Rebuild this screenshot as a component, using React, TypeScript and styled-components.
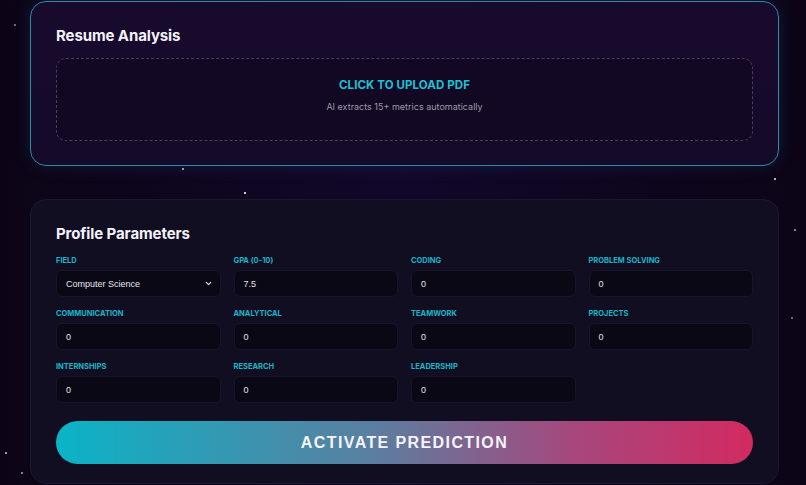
import styled, { createGlobalStyle } from "styled-components";

const GlobalStyle = createGlobalStyle`
  html, body {
    margin: 0;
    padding: 0;
    background: #0d0519;
    font-family: Inter, "Liberation Sans", sans-serif;
  }
  * { box-sizing: border-box; }
`;

const fields = [
  { label: "Field", value: "Computer Science", select: true },
  { label: "GPA (0-10)", value: "7.5" },
  { label: "Coding", value: "0" },
  { label: "Problem Solving", value: "0" },
  { label: "Communication", value: "0" },
  { label: "Analytical", value: "0" },
  { label: "Teamwork", value: "0" },
  { label: "Projects", value: "0" },
  { label: "Internships", value: "0" },
  { label: "Research", value: "0" },
  { label: "Leadership", value: "0" },
];

export default function App() {
  return (
    <Page>
      <GlobalStyle />
      <UploadCard>
        <CardTitle>Resume Analysis</CardTitle>
        <DropZone>
          <DropTitle>CLICK TO UPLOAD PDF</DropTitle>
          <DropHint>AI extracts 15+ metrics automatically</DropHint>
        </DropZone>
      </UploadCard>

      <ParamsCard>
        <CardTitle>Profile Parameters</CardTitle>
        <FieldGrid>
          {fields.map((f) => (
            <Field key={f.label}>
              <Label>{f.label}</Label>
              {f.select ? (
                <SelectBox>
                  <span>{f.value}</span>
                  <svg width="9" height="9" viewBox="0 0 24 24" fill="none" stroke="#d8d8e0" strokeWidth="3.5" strokeLinecap="round" strokeLinejoin="round">
                    <path d="M6 9l6 6 6-6" />
                  </svg>
                </SelectBox>
              ) : (
                <Input>{f.value}</Input>
              )}
            </Field>
          ))}
        </FieldGrid>
        <PredictButton>ACTIVATE PREDICTION</PredictButton>
      </ParamsCard>
    </Page>
  );
}

const Page = styled.div`
  min-height: 485px;
  padding: 1px 27px 0 30px;
  display: flex;
  flex-direction: column;
  gap: 33px;
  background-color: #0d0519;
  background-image:
    radial-gradient(circle at 245px 193px, rgba(255,255,255,0.8) 0 1px, transparent 1.5px),
    radial-gradient(circle at 183px 169px, rgba(255,255,255,0.6) 0 1px, transparent 1.5px),
    radial-gradient(circle at 775px 179px, rgba(255,255,255,0.7) 0 1px, transparent 1.5px),
    radial-gradient(circle at 795px 230px, rgba(255,255,255,0.5) 0 1px, transparent 1.5px),
    radial-gradient(circle at 6px 453px, rgba(255,255,255,0.6) 0 1px, transparent 1.5px),
    radial-gradient(circle at 22px 473px, rgba(255,255,255,0.5) 0 1px, transparent 1.5px),
    radial-gradient(circle at 15px 25px, rgba(255,255,255,0.4) 0 1px, transparent 1.5px),
    radial-gradient(circle at 792px 318px, rgba(255,255,255,0.4) 0 1px, transparent 1.5px),
    linear-gradient(90deg, #0c0416 0%, #12072a 50%, #0c0416 100%);
`;

const Card = styled.section`
  border-radius: 16px;
  padding: 23px 25px 24px 25px;
  display: flex;
  flex-direction: column;
  flex-shrink: 0;
`;

const UploadCard = styled(Card)`
  height: 165px;
  background: linear-gradient(180deg, #180a2d 0%, #150a28 100%);
  border: 1px solid #2a8aa8;
  box-shadow: 0 0 18px rgba(30, 140, 190, 0.18);
  gap: 11px;
`;

const ParamsCard = styled(Card)`
  height: 285px;
  background: #110e22;
  border: 1px solid #1b1833;
  padding-bottom: 0;
`;

const CardTitle = styled.h2`
  margin: 0;
  font-size: 15px;
  line-height: 22px;
  font-weight: 700;
  color: #f4f2fa;
  letter-spacing: -0.1px;
`;

const DropZone = styled.div`
  height: 83px;
  flex-shrink: 0;
  border: 1px dashed #4a3e60;
  border-radius: 10px;
  background: #120823;
  display: flex;
  flex-direction: column;
  align-items: center;
  justify-content: center;
  gap: 9px;
  padding-bottom: 8px;
`;

const DropTitle = styled.div`
  font-size: 11.5px;
  line-height: 14px;
  font-weight: 700;
  color: #19c3d6;
  letter-spacing: 0.1px;
`;

const DropHint = styled.div`
  font-size: 9px;
  line-height: 12px;
  color: #9c98a8;
`;

const FieldGrid = styled.div`
  margin-top: 10px;
  display: grid;
  grid-template-columns: repeat(4, 1fr);
  column-gap: 13px;
  row-gap: 11px;
`;

const Field = styled.div`
  display: flex;
  flex-direction: column;
  gap: 3px;
`;

const Label = styled.div`
  font-size: 7.5px;
  line-height: 12px;
  font-weight: 700;
  color: #17b6c8;
  text-transform: uppercase;
`;

const Input = styled.div`
  height: 27px;
  border-radius: 6px;
  background: #0b0816;
  border: 1px solid #181529;
  color: #e6e4ee;
  font-family: "Liberation Sans", Arial, sans-serif;
  font-size: 9px;
  padding: 0 9px;
  display: flex;
  align-items: center;
`;

const SelectBox = styled(Input)`
  justify-content: space-between;
  padding-right: 7px;
`;

const PredictButton = styled.button`
  margin-top: 18px;
  height: 43px;
  flex-shrink: 0;
  border: none;
  border-radius: 22px;
  background: linear-gradient(90deg, #0ab4c7 0%, #5a7fa0 45%, #a8467c 75%, #d22a60 100%);
  color: #f6f4fa;
  font-family: "Liberation Sans", Arial, sans-serif;
  font-size: 16px;
  font-weight: 700;
  letter-spacing: 1.4px;
`;
